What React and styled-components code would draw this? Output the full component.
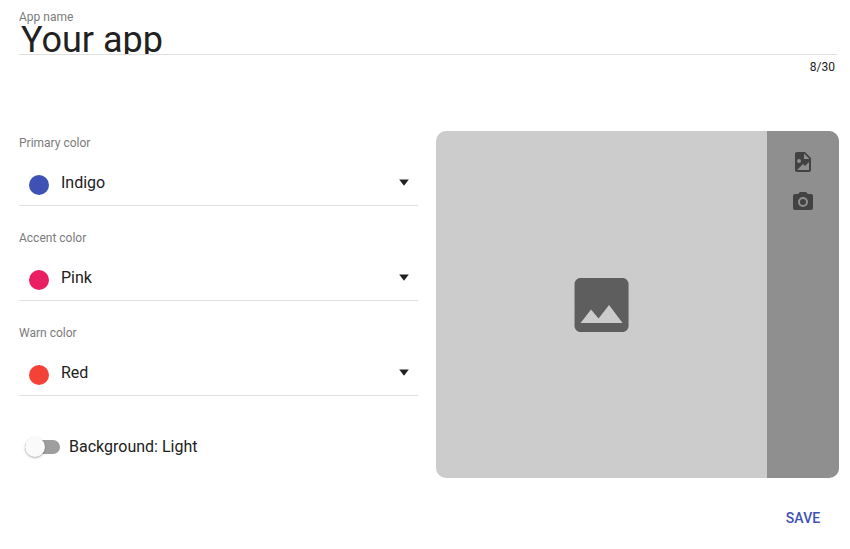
import React from "react";
import styled, { createGlobalStyle } from "styled-components";

const GlobalStyle = createGlobalStyle`
  * { box-sizing: border-box; }
  body {
    margin: 0;
    background: #fff;
    color: #212121;
    font-family: Roboto, sans-serif;
    overflow: hidden;
  }
`;

const Page = styled.main`
  width: 850px;
  height: 549px;
  display: flex;
  flex-direction: column;
  padding: 9px 11px 0 19px;
`;

const NameField = styled.div`
  width: 818px;
  height: 122px;
  display: flex;
  flex-direction: column;
`;

const Label = styled.label`
  display: block;
  width: 200px;
  height: 16px;
  font-size: 16px;
  line-height: 21px;
  color: #7b7b7b;
  transform: scale(0.75);
  transform-origin: left top;
`;

const NameInput = styled.input`
  height: 30px;
  width: 100%;
  margin: 0;
  padding: 0 2px;
  border: 0;
  border-bottom: 1px solid #e0e0e0;
  outline: none;
  background: transparent;
  color: #212121;
  font: 400 36px/30px Roboto, sans-serif;
`;

const Counter = styled.span`
  align-self: flex-end;
  margin: 4px 2px 0 0;
  font-size: 12px;
  line-height: 16px;
`;

const Content = styled.section`
  display: flex;
  justify-content: space-between;
  height: 347px;
`;

const Form = styled.div`
  width: 399px;
  padding-top: 4px;
`;

const ColorField = styled.div`
  height: 95px;
  display: flex;
  flex-direction: column;
`;

const Select = styled.div`
  height: 55px;
  display: flex;
  align-items: center;
  padding: 8px 9px 0 10px;
  border-bottom: 1px solid #e0e0e0;
`;

const Swatch = styled.span`
  width: 20px;
  height: 20px;
  margin-top: 5px;
  border-radius: 50%;
  background: ${(p) => p.$color};
`;

const ColorName = styled.span`
  flex: 1;
  margin: 2px 0 0 12px;
  font-size: 16px;
  line-height: 24px;
`;

const Arrow = styled.svg`
  width: 10px;
  height: 8px;
  fill: #212121;
`;

const ToggleRow = styled.div`
  display: flex;
  align-items: center;
  height: 24px;
  margin-top: 15px;
  padding-left: 6px;
`;

const ToggleText = styled.span`
  font-size: 16px;
  line-height: 20px;
`;

const Track = styled.span`
  display: flex;
  align-items: center;
  width: 35px;
  height: 14px;
  margin-right: 9px;
  border-radius: 7px;
  background: #9e9e9e;
`;

const Thumb = styled.span`
  width: 20px;
  height: 20px;
  flex: none;
  border-radius: 50%;
  background: #fafafa;
  box-shadow: 0 1px 3px rgba(0, 0, 0, 0.2), 0 1px 1px rgba(0, 0, 0, 0.14);
`;

const Preview = styled.div`
  width: 403px;
  display: flex;
  flex: none;
  border-radius: 10px;
  overflow: hidden;
  background: #ccc;
`;

const ImageArea = styled.div`
  flex: 1;
  display: flex;
  align-items: center;
  justify-content: center;
`;

const ImageTools = styled.div`
  width: 72px;
  padding-top: 19px;
  display: flex;
  flex-direction: column;
  align-items: center;
  gap: 16px;
  background: #8f8f8f;
`;

const Icon = styled.svg`
  display: block;
  width: ${(p) => p.$size}px;
  height: ${(p) => p.$size}px;
  fill: ${(p) => p.$color};
`;

const Actions = styled.footer`
  display: flex;
  justify-content: flex-end;
  padding: 22px 18.6px 0 0;
`;

const SaveButton = styled.button`
  height: 36px;
  padding: 0;
  border: 0;
  background: none;
  color: #3f51b5;
  font: 500 14px/36px Roboto, sans-serif;
  letter-spacing: 0.14px;
`;

const colors = [
  { label: "Primary color", name: "Indigo", value: "#3f51b5" },
  { label: "Accent color", name: "Pink", value: "#e91e63" },
  { label: "Warn color", name: "Red", value: "#f44336" },
];

export default function App() {
  return (
    <Page>
      <GlobalStyle />
      <NameField>
        <Label htmlFor="name">App name</Label>
        <NameInput id="name" defaultValue="Your app" maxLength={30} />
        <Counter>8/30</Counter>
      </NameField>
      <Content>
        <Form>
          {colors.map((c) => (
            <ColorField key={c.name}>
              <Label>{c.label}</Label>
              <Select>
                <Swatch $color={c.value} />
                <ColorName>{c.name}</ColorName>
                <Arrow viewBox="0 0 10 8">
                  <path d="M0.2 1.4H9.8L5 7.8z" />
                </Arrow>
              </Select>
            </ColorField>
          ))}
          <ToggleRow>
            <Track><Thumb /></Track>
            <ToggleText>Background: Light</ToggleText>
          </ToggleRow>
        </Form>
        <Preview>
          <ImageArea>
            <Icon $size={72} $color="#5e5e5e" viewBox="0.15 0 24 24">
              <path d="M21 19V5c0-1.1-.9-2-2-2H5c-1.1 0-2 .9-2 2v14c0 1.1.9 2 2 2h14c1.1 0 2-.9 2-2zM8.5 13.5l2.5 3.01L14.5 12l4.5 6H5l3.5-4.5z" />
            </Icon>
          </ImageArea>
          <ImageTools>
            <Icon $size={24} $color="#424242" viewBox="0 0 24 24">
              <path d="M13,9H18.5L13,3.5V9M6,2H14L20,8V20A2,2 0 0,1 18,22H6C4.89,22 4,21.1 4,20V4C4,2.89 4.89,2 6,2M6,20H15L18,20V12L14,16L12,14L6,20M8,9A2,2 0 0,0 6,11A2,2 0 0,0 8,13A2,2 0 0,0 10,11A2,2 0 0,0 8,9Z" />
            </Icon>
            <Icon $size={24} $color="#424242" viewBox="0 0 24 24">
              <path d="M4,4H7L9,2H15L17,4H20A2,2 0 0,1 22,6V18A2,2 0 0,1 20,20H4A2,2 0 0,1 2,18V6A2,2 0 0,1 4,4M12,7A5,5 0 0,0 7,12A5,5 0 0,0 12,17A5,5 0 0,0 17,12A5,5 0 0,0 12,7M12,9A3,3 0 0,1 15,12A3,3 0 0,1 12,15A3,3 0 0,1 9,12A3,3 0 0,1 12,9Z" />
            </Icon>
          </ImageTools>
        </Preview>
      </Content>
      <Actions>
        <SaveButton>SAVE</SaveButton>
      </Actions>
    </Page>
  );
}
